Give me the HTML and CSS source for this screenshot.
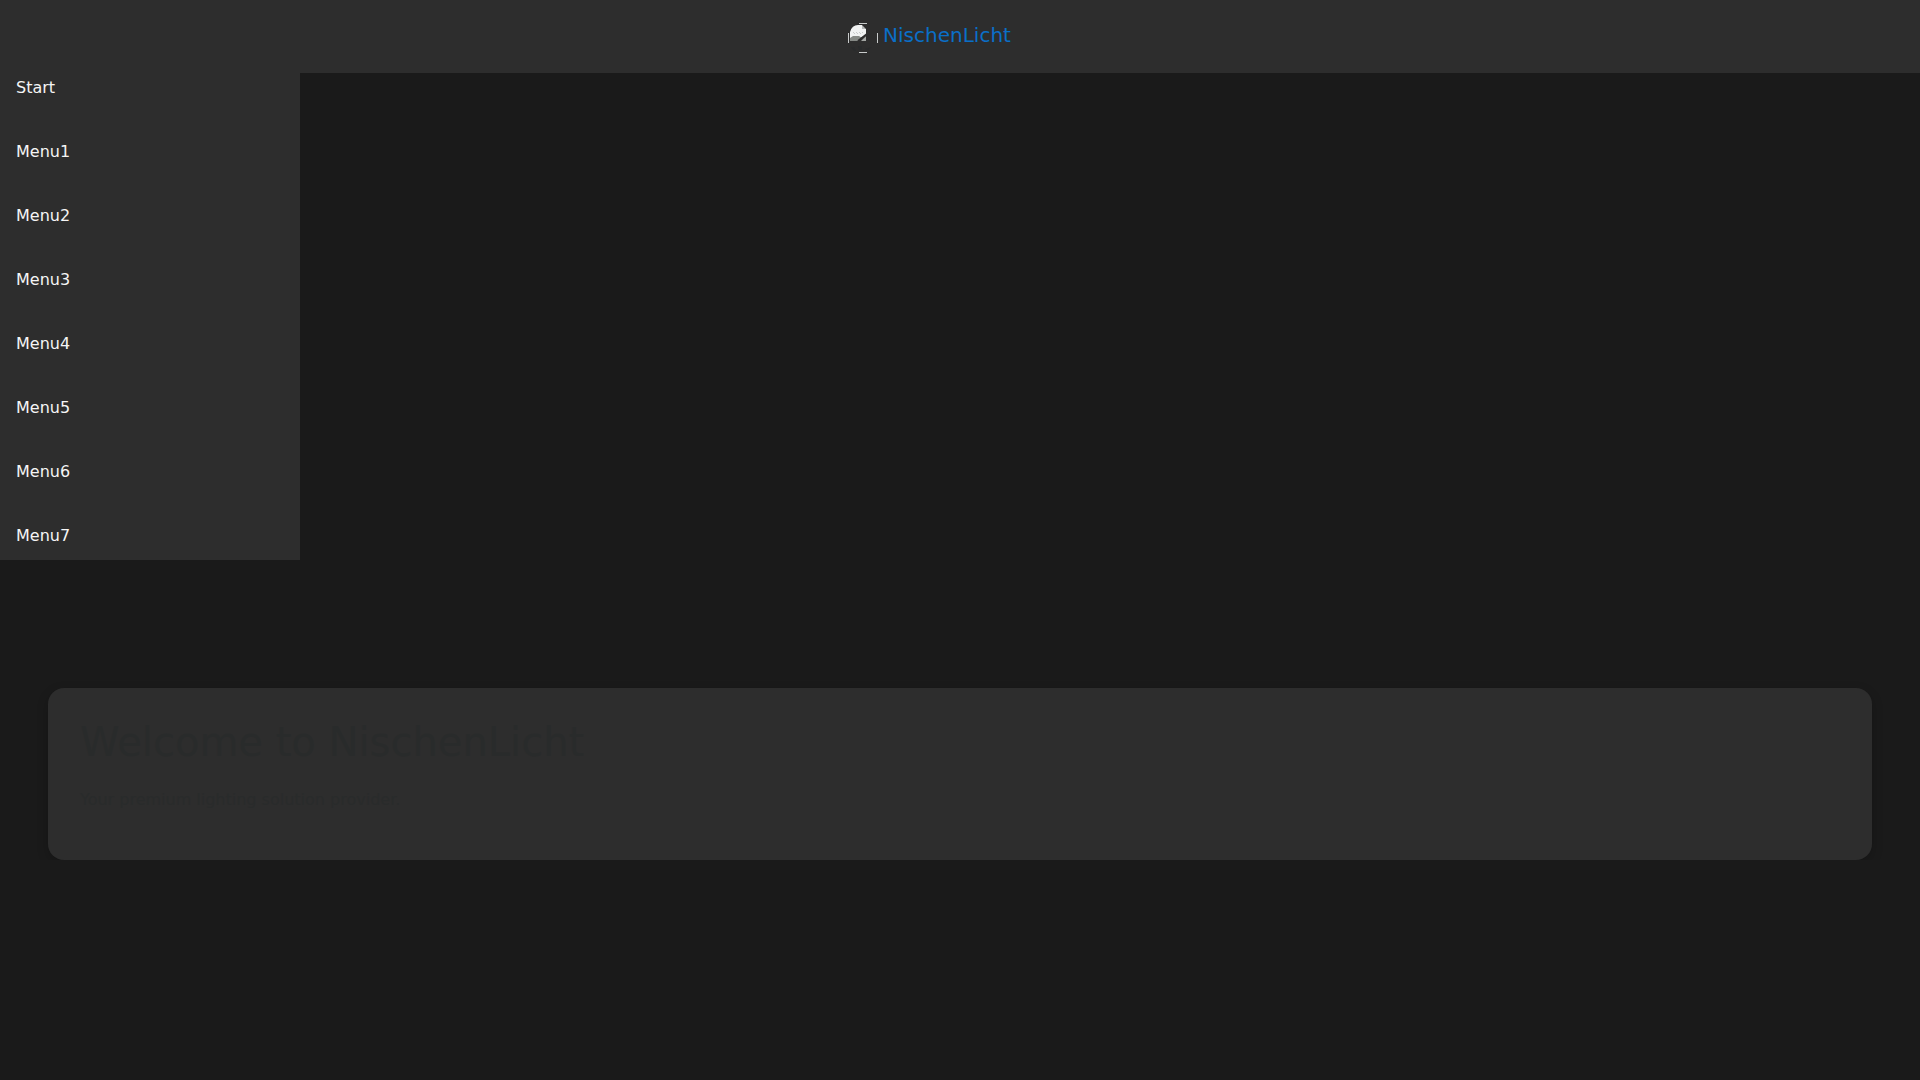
FILE: index.html
```
<!DOCTYPE html>
<html lang="en">
<head>
  <meta charset="UTF-8">
  <meta name="viewport" content="width=device-width, initial-scale=1.0">
  <title>NischenLicht</title>
  <link rel="stylesheet" href="styles.css">
</head>
<body>

<header class="header">
  <a class="brand" href="#">
    <svg class="logo" viewBox="0 0 30 30" aria-hidden="true">
      <path fill="#f1f3f3" d="M2 15V9Q4 2 10 2h4v4h4v6l-6 3-4-2-4 3H2z"/>
      <path fill="#b5b8b8" d="M14 2l4 4h-4z"/>
      <path fill="#c9cccc" d="M5 9h1v1H5zM8 9h1v1H8zM11 9h1v1h-1zM14 9h1v1h-1zM6 10h1v1H6zM9 10h1v1H9zM12 10h1v1h-1z"/>
      <path fill="#858985" d="M2 18v-3l3-2h6l3 2-3 3z"/>
      <path fill="#a4a7a4" d="M13 18l5-5v5z"/>
      <path fill="none" stroke="#2d2d2d" stroke-width="2" d="M10 18l9-7"/>
      <path fill="none" stroke="#c8cbcb" d="M11 .5h8M11 29.5h8M.5 10v10M29.5 10v10"/>
      <path fill="#292b2c" d="M3 24h3l2 4H6zM10 23h4v4h-3zM17 26l7-2-4 3z"/>
    </svg>
    <span>NischenLicht</span>
  </a>
</header>

<nav class="sidebar">
  <a href="#">Start</a>
  <a href="#">Menu1</a>
  <a href="#">Menu2</a>
  <a href="#">Menu3</a>
  <a href="#">Menu4</a>
  <a href="#">Menu5</a>
  <a href="#">Menu6</a>
  <a href="#">Menu7</a>
</nav>

<main class="content">
  <h1>Welcome to NischenLicht</h1>
  <p>Your premium lighting solution provider.</p>
</main>

</body>
</html>
```

FILE: styles.css
```
* { box-sizing: border-box; }
body { margin: 0; background-color: #1a1a1a; color: #292b2b; font-family: "DejaVu Sans", sans-serif; font-size: 16px; line-height: 24px; }
a { text-decoration: none; }

.header { display: flex; justify-content: center; padding: 20px 61px 20px 0; background-color: #2d2d2d; }
.brand { display: flex; gap: 5px; color: #0a6fc8; font-size: 20px; line-height: 30px; }
.brand span { height: 33px; }
.logo { width: 30px; height: 30px; margin-top: 3px; }

.sidebar { display: flex; flex-direction: column; gap: 40px; width: 300px; padding: 3px 16px 12px; background-color: #2d2d2d; }
.sidebar a { color: #f5f5f5; }

.content { margin: 128px 48px 0; padding: 32px; background-color: #2d2d2d; border-radius: 16px; box-shadow: 0 4px 12px rgba(0, 0, 0, 0.2); }
h1 { margin: 0 0 24px; font-size: 40px; font-weight: 400; line-height: 44px; }
p { margin: 0 0 16px; }
```
